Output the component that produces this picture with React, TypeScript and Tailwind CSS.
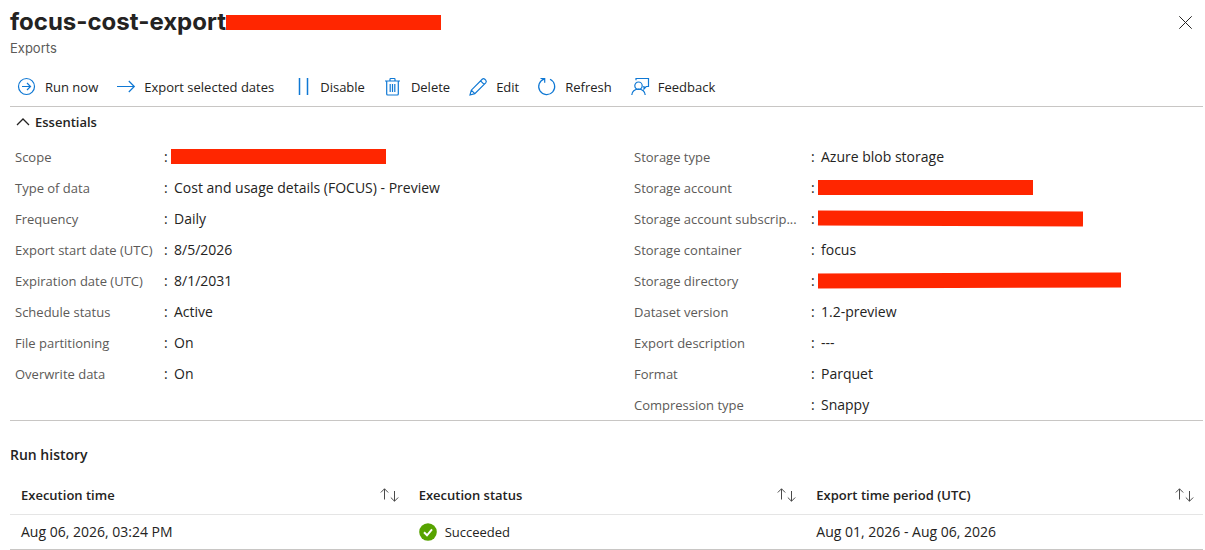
import type { ReactNode } from "react";

type Field = { label: string; value?: string; redact?: string };

const leftFields: Field[] = [
  { label: "Scope", redact: "w-[215px]" },
  { label: "Type of data", value: "Cost and usage details (FOCUS) - Preview" },
  { label: "Frequency", value: "Daily" },
  { label: "Export start date (UTC)", value: "8/5/2026" },
  { label: "Expiration date (UTC)", value: "8/1/2031" },
  { label: "Schedule status", value: "Active" },
  { label: "File partitioning", value: "On" },
  { label: "Overwrite data", value: "On" },
];

const rightFields: Field[] = [
  { label: "Storage type", value: "Azure blob storage" },
  { label: "Storage account", redact: "w-[215px]" },
  { label: "Storage account subscrip...", redact: "w-[265px] rotate-[0.2deg]" },
  { label: "Storage container", value: "focus" },
  { label: "Storage directory", redact: "w-[303px] -rotate-[0.2deg]" },
  { label: "Dataset version", value: "1.2-preview" },
  { label: "Export description", value: "---" },
  { label: "Format", value: "Parquet" },
  { label: "Compression type", value: "Snappy" },
];

function Command({ label, children }: { label: string; children: ReactNode }) {
  return (
    <button type="button" className="flex items-center gap-2 whitespace-nowrap">
      <svg
        aria-hidden="true"
        className="size-5 shrink-0 text-[#0f78d4]"
        viewBox="0 0 20 20"
        fill="none"
        stroke="currentColor"
        strokeWidth="1.2"
      >
        {children}
      </svg>
      {label}
    </button>
  );
}

function FieldList({ fields, columns }: { fields: Field[]; columns: string }) {
  return (
    <dl>
      {fields.map((f) => (
        <div key={f.label} className={`grid h-[31px] items-center ${columns}`}>
          <dt className="whitespace-nowrap text-[#5c5a58]">{f.label}</dt>
          <dd className="flex items-center text-sm">
            <span className="w-[10px] shrink-0">:</span>
            {f.redact ? <span className={`-ml-[3px] h-[15px] shrink-0 bg-[#ff2600] ${f.redact}`} /> : f.value}
          </dd>
        </div>
      ))}
    </dl>
  );
}

function HeaderCell({ label }: { label: string }) {
  return (
    <th scope="col" className="p-0 text-left font-semibold">
      <div className="flex h-[39px] items-center justify-between pr-[9px] pl-[11px]">
        {label}
        <button type="button" aria-label={`Sort by ${label}`} className="shrink-0">
          <svg className="h-[14px] w-5" viewBox="0 0 20 14" fill="none" stroke="#4a4a4a" strokeWidth="1">
            <path d="M5.500 11.500V.8M1.800 4.500L5.500.8l3.700 3.700M15.500 3v10.200M11.800 9.500l3.700 3.700 3.700-3.700" />
          </svg>
        </button>
      </div>
    </th>
  );
}

export default function App() {
  return (
    <main className="bg-white pr-[2px] pl-[10px] font-['Open_Sans','Noto_Sans',sans-serif] text-[13px] leading-5 text-[#242322]">
      <header className="flex items-start justify-between">
        <div>
          <div className="flex h-11 items-center">
            <h1 className="font-[Inter,sans-serif] text-2xl font-bold">focus-cost-export</h1>
            <span className="h-[15px] w-[215px] bg-[#ff2600]" />
          </div>
          <p className="-mt-1 h-[28px] font-[Inter,sans-serif] text-[13px] leading-4 text-[#5c5a58]">Exports</p>
        </div>
        <button type="button" aria-label="Close" className="mt-4 mr-[11px]">
          <svg className="size-[13px]" viewBox="0 0 13 13" stroke="#242322" strokeWidth="1">
            <path d="M.3.3l12.400 12.400M12.700.3L.3 12.700" />
          </svg>
        </button>
      </header>

      <div
        role="toolbar"
        aria-label="Export actions"
        className="flex h-[39px] items-center gap-[18px] border-b border-[#c8c6c4] pl-[7px]"
      >
        <Command label="Run now">
          <circle cx="9.500" cy="9.500" r="8" />
          <path d="M5 9.500h8.500M10 6l3.500 3.500L10 13" />
        </Command>
        <Command label="Export selected dates">
          <path d="M1 9.500h17M12.800 4l5.500 5.500-5.500 5.500" />
        </Command>
        <Command label="Disable">
          <path d="M7.500 1v17M15.500 1v17" strokeWidth="1.500" />
        </Command>
        <Command label="Delete">
          <path d="M2 4h15M7 4V2.200q0-.7.7-.7h3.600q.7 0 .7.7V4M3.700 4v13q0 1 1 1h9.600q1 0 1-1V4" />
          <path d="M7.200 7v8M9.500 7v8M11.800 7v8" />
        </Command>
        <Command label="Edit">
          <path d="M2 18l1.300-4.800L14.200 2.300q1.300-1.200 2.600 0l.9.9q1.200 1.300 0 2.600L6.800 16.700zM12.600 3.900l3.500 3.500M3.300 13.200l3.500 3.500" />
        </Command>
        <Command label="Refresh">
          <path d="M7.500 1.900A8 8 0 1 0 13 2.300M3.500 1.500h4.200v4.300" />
        </Command>
        <Command label="Feedback">
          <circle cx="8.500" cy="8.700" r="3.700" />
          <path d="M1.800 18a6.700 6 0 0 1 13.400 0M6 3.300V1.500h12.500v8h-2.300l-2.200 2.500V9.500h-.8" />
        </Command>
      </div>

      <section>
        <h2>
          <button type="button" aria-expanded="true" className="flex h-[29px] items-center gap-[5px] pl-[6px] font-semibold">
            <svg aria-hidden="true" className="h-2 w-[14px]" viewBox="0 0 14 8" fill="none" stroke="#242322" strokeWidth="1.300">
              <path d="M1 7l6-6 6 6" />
            </svg>
            Essentials
          </button>
        </h2>
        <div className="grid grid-cols-[619fr_569fr] border-b border-[#c8c6c4] pt-[5px] pl-[5px]">
          <FieldList fields={leftFields} columns="grid-cols-[149px_1fr]" />
          <FieldList fields={rightFields} columns="grid-cols-[169px_1fr] gap-x-2" />
        </div>
      </section>

      <section>
        <h2 className="pt-6 pb-[10px] text-sm leading-5 font-semibold">Run history</h2>
        <table className="w-full table-fixed border-collapse border-b border-[#c8c6c4]">
          <thead>
            <tr className="border-b border-[#e5e5e5]">
              <HeaderCell label="Execution time" />
              <HeaderCell label="Execution status" />
              <HeaderCell label="Export time period (UTC)" />
            </tr>
          </thead>
          <tbody className="text-sm">
            <tr className="h-[35px]">
              <td className="pl-[11px]">Aug 06, 2026, 03:24 PM</td>
              <td className="pl-[11px]">
                <span className="flex items-center gap-2">
                  <svg aria-hidden="true" className="size-[18px]" viewBox="0 0 18 18">
                    <circle cx="9" cy="9" r="8.800" fill="#57a300" />
                    <path d="M5 9.300l3 3 5-6" fill="none" stroke="#fff" strokeWidth="2" />
                  </svg>
                  <span className="text-[13px]">Succeeded</span>
                </span>
              </td>
              <td className="pl-[11px]">Aug 01, 2026 - Aug 06, 2026</td>
            </tr>
          </tbody>
        </table>
      </section>
    </main>
  );
}
